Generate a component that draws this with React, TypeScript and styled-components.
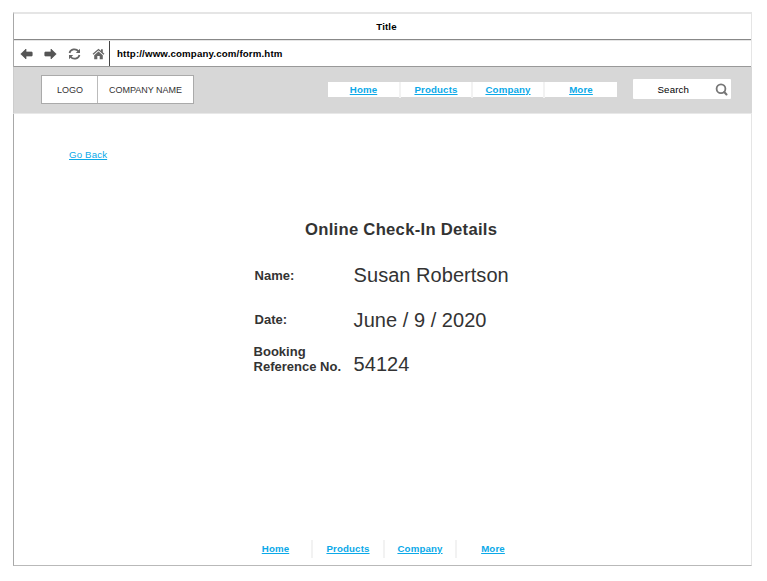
import React from "react";
import styled, { createGlobalStyle } from "styled-components";

const GlobalStyle = createGlobalStyle`
  * { box-sizing: border-box; }
  body { margin: 0; background: #fff; font-family: "Liberation Sans", Arial, sans-serif; font-size: 9.7px; color: #333; }
`;

const Page = styled.div`
  height: 581px;
  padding: 12px 15px 15px 13px;
`;

const Window = styled.div`
  display: flex;
  flex-direction: column;
  height: 554px;
  border: 1px solid #e5e5e5;
  border-top-width: 2px;
  border-left-color: #a8a8a8;
  border-bottom-color: #b9b9b9;
`;

const TitleBar = styled.div`
  height: 26px;
  line-height: 26px;
  padding-left: 8px;
  text-align: center;
  font-weight: 700;
  letter-spacing: 0.12px;
  color: #000;
  border-bottom: 1px solid #888;
`;

const AddressBar = styled.div`
  display: flex;
  height: 27px;
  border-top: 1px solid #e5e5e5;
  border-bottom: 1px solid #999;
`;

const Controls = styled.div`
  display: flex;
  align-items: center;
  width: 96px;
  padding: 0 0 0 5.5px;
  gap: 11px;
  border-right: 1px solid #444;
  svg { display: block; flex: none; }
`;

const Url = styled.div`
  padding-left: 7px;
  line-height: 26px;
  font-weight: 700;
  letter-spacing: 0.15px;
  color: #000;
`;

const Header = styled.header`
  display: flex;
  align-items: flex-start;
  height: 47px;
  margin-left: -1px;
  margin-right: -1px;
  background: #d7d7d7;
  border-left: 1px solid #ccc;
  border-bottom: 1px solid #e8e8e8;
`;

const Brand = styled.div`
  display: flex;
  width: 153px;
  height: 29px;
  margin: 8px 0 0 27px;
  background: #fff;
  border: 1px solid #aaa;
  font-size: 9px;
  line-height: 28px;
  text-align: center;
`;

const Logo = styled.div`
  width: 56px;
  padding-left: 1px;
  border-right: 1px solid #bbb;
`;

const CompanyName = styled.div`
  flex: 1;
`;

const Nav = styled.nav<{ $tall?: boolean }>`
  display: grid;
  grid-template-columns: 73px 72px 72px 72px;
  width: 289px;
  height: ${(p) => (p.$tall ? 17 : 15)}px;
  background: #fff;
  line-height: ${(p) => (p.$tall ? 18 : 16)}px;
`;

const TopNav = styled(Nav)`
  margin: 15px 0 0 134px;
`;

const NavItem = styled.div`
  text-align: center;
  &:not(:last-child) { border-right: 2px solid #f2f2f2; }
`;

const Link = styled.a<{ $bold?: boolean }>`
  color: #0ba9e8;
  font-weight: ${(p) => (p.$bold ? 700 : 400)};
  letter-spacing: 0.14px;
  text-decoration: underline;
  text-decoration-thickness: 1px;
  text-underline-offset: 1px;
`;

const SearchBox = styled.div`
  display: flex;
  align-items: center;
  justify-content: space-between;
  width: 98px;
  height: 20px;
  margin: 12px 0 0 16px;
  padding: 0 3px 0 24.5px;
  border-radius: 1px;
  background: #fff;
  color: #000;
  letter-spacing: 0.14px;
`;

const Content = styled.main`
  display: flex;
  flex-direction: column;
  flex: 1;
`;

const BackRow = styled.div`
  height: 12px;
  margin: 35px 0 0 55px;
  line-height: 12px;
`;

const Heading = styled.h1`
  margin: 59px 0 0 291px;
  font-size: 16.67px;
  line-height: 20px;
  letter-spacing: 0.27px;
`;

const Details = styled.dl`
  display: grid;
  grid-template-columns: 100px 1fr;
  grid-template-rows: 44px 45px 44px;
  align-items: center;
  margin: 13px 0 0 239.6px;
`;

const Term = styled.dt<{ $indent?: number; $raise?: number }>`
  padding-left: ${(p) => p.$indent ?? 0}px;
  padding-bottom: ${(p) => p.$raise ?? 0}px;
  font-size: 13px;
  line-height: 15px;
  font-weight: 700;
`;

const Value = styled.dd`
  margin: 0;
  font-size: 20px;
  line-height: 24px;
  letter-spacing: 0.04px;
`;

const Footer = styled.footer`
  margin: auto 0 8px 226px;
`;

const Arrow = ({ right }: { right?: boolean }) => (
  <svg width="13" height="12" viewBox="0 0 13 12">
    <path
      d="M.8 6 6 1v3h5.6q.6 0 .6.6v2.8q0 .6-.6.6H6v3Z"
      fill="#555"
      stroke="#555"
      strokeWidth=".7"
      strokeLinejoin="round"
      transform={right ? "matrix(-1 0 0 1 13 0)" : undefined}
    />
  </svg>
);

const Refresh = () => (
  <svg width="13" height="12" viewBox="0 0 13 12">
    <g fill="none" stroke="#666" strokeWidth="1.7">
      <path d="M1.5 5C2.5 1 8 .1 10.4 3.2M11.5 7C10.5 11 5 11.9 2.6 8.8" />
    </g>
    <path d="M12 .7v4.2H7.8ZM1 11.3V7.1h4.2Z" fill="#666" />
  </svg>
);

const HomeIcon = () => (
  <svg width="13" height="12" viewBox="0 0 13 12">
    <path d="m1 6.3 5.5-4.8L12 6.3" fill="none" stroke="#666" strokeWidth="1.3" />
    <path d="M9 1.2h1.8v4L9 3.6ZM6.5 3.4l4.3 3.8v4H7.7V8H5.3v3.2H2.2v-4Z" fill="#666" />
  </svg>
);

const SearchIcon = () => (
  <svg width="13" height="13" viewBox="0 0 13 13" fill="none" stroke="#777">
    <circle cx="6" cy="5.7" r="4.4" strokeWidth="1.8" />
    <path d="m9.2 9 2.3 2.5" strokeWidth="2.1" strokeLinecap="round" />
  </svg>
);

const links = ["Home", "Products", "Company", "More"];
const navItems = links.map((label) => (
  <NavItem key={label}>
    <Link $bold>{label}</Link>
  </NavItem>
));

export default function App() {
  return (
    <Page>
      <GlobalStyle />
      <Window>
        <TitleBar>Title</TitleBar>
        <AddressBar>
          <Controls>
            <Arrow />
            <Arrow right />
            <Refresh />
            <HomeIcon />
          </Controls>
          <Url>http://www.company.com/form.htm</Url>
        </AddressBar>
        <Header>
          <Brand>
            <Logo>LOGO</Logo>
            <CompanyName>COMPANY NAME</CompanyName>
          </Brand>
          <TopNav>{navItems}</TopNav>
          <SearchBox>
            Search
            <SearchIcon />
          </SearchBox>
        </Header>
        <Content>
          <BackRow>
            <Link>Go Back</Link>
          </BackRow>
          <Heading>Online Check-In Details</Heading>
          <Details>
            <Term $indent={1}>Name:</Term>
            <Value>Susan Robertson</Value>
            <Term $indent={1}>Date:</Term>
            <Value>June / 9 / 2020</Value>
            <Term $raise={10}>
              Booking
              <br />
              Reference No.
            </Term>
            <Value>54124</Value>
          </Details>
          <Footer>
            <Nav $tall>{navItems}</Nav>
          </Footer>
        </Content>
      </Window>
    </Page>
  );
}
